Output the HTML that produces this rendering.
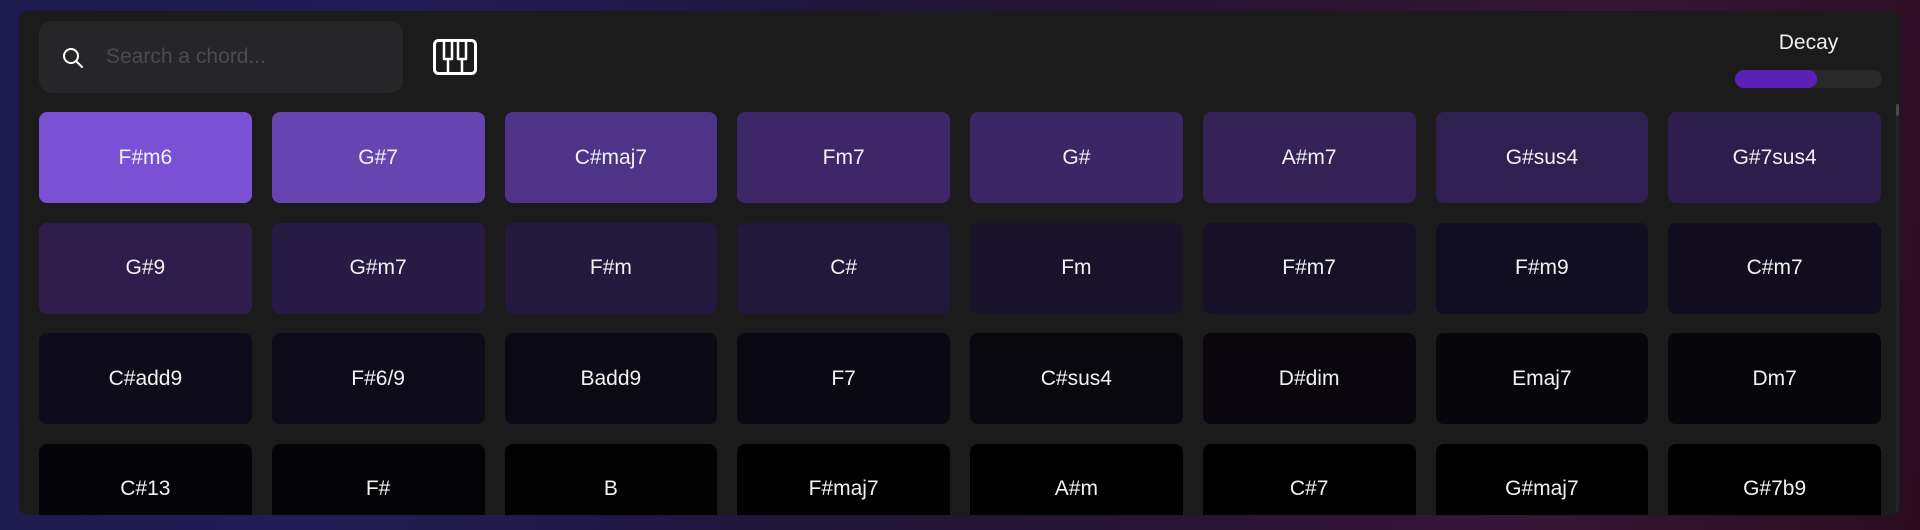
<!DOCTYPE html>
<html><head><meta charset="utf-8"><style>
*{box-sizing:border-box;margin:0;padding:0}
html,body{width:1920px;height:530px;overflow:hidden}
body{background:linear-gradient(100deg,#1c1a4e 0%,#221d55 20%,#1f1538 45%,#2a1433 65%,#371536 80%,#2b0c1e 100%);font-family:"Liberation Sans","DejaVu Sans",sans-serif;position:relative}
.panel{position:absolute;left:19px;top:11px;width:1881px;height:504px;background:#1b1b1c;border-radius:9px;overflow:hidden}
.search{position:absolute;left:20px;top:10px;width:364px;height:72px;background:#262628;border-radius:13px}
.search svg{position:absolute;left:23px;top:26px}
.search span{position:absolute;left:67px;top:24px;font-size:21px;color:#4b4b50}
.piano{position:absolute;left:414px;top:28px}
.decay{position:absolute;left:1716px;top:20px;width:147px;text-align:center;color:#eee;font-size:21px}
.track{position:absolute;left:1716px;top:59px;width:147px;height:18px;background:#29292b;border-radius:9px}
.fill{position:absolute;left:0;top:0;width:82px;height:18px;background:#5b21b6;border-radius:9px}
.sb{position:absolute;left:1877px;top:93px;width:3px;height:420px;background:#242426}
.sbt{position:absolute;left:1877px;top:93px;width:3px;height:12px;background:#4a4a4c;border-radius:2px}
.grid{position:absolute;left:20px;top:101px;display:grid;grid-template-columns:repeat(8,212.75px);column-gap:20px;row-gap:19.5px}
.b{height:91px;border-radius:8px;display:flex;align-items:center;justify-content:center;color:#f2f2f2;font-size:21px}
</style></head><body>
<div class="panel">
 <div class="search">
  <svg width="22" height="22" viewBox="0 0 22 22" fill="none" stroke="#fff" stroke-width="2"><circle cx="9" cy="9" r="7"/><path d="M14 14l6 6" stroke-linecap="round"/></svg>
  <span>Search a chord...</span>
 </div>
 <svg class="piano" width="44" height="36" viewBox="0 0 44 36" fill="none" stroke="#fff" stroke-width="3"><rect x="1.5" y="1.5" width="41" height="33" rx="4"/><path d="M11 2v18h8V2M25 2v18h8V2M15 20v14M29 20v14" stroke-width="2.5" stroke-linejoin="round"/></svg>
 <div class="decay">Decay</div>
 <div class="track"><div class="fill"></div></div>
 <div class="sb"></div><div class="sbt"></div>
 <div class="grid">
  <div class="b" style="background:#7a50d5">F#m6</div>
  <div class="b" style="background:#6745b0">G#7</div>
  <div class="b" style="background:#4d3488">C#maj7</div>
  <div class="b" style="background:#3d2768">Fm7</div>
  <div class="b" style="background:#3b2666">G#</div>
  <div class="b" style="background:#342155">A#m7</div>
  <div class="b" style="background:#301f51">G#sus4</div>
  <div class="b" style="background:#2c1d4c">G#7sus4</div>
  <div class="b" style="background:#2e1d4b">G#9</div>
  <div class="b" style="background:#271a44">G#m7</div>
  <div class="b" style="background:#23183d">F#m</div>
  <div class="b" style="background:#22183c">C#</div>
  <div class="b" style="background:#19122b">Fm</div>
  <div class="b" style="background:#161127">F#m7</div>
  <div class="b" style="background:#120e21">F#m9</div>
  <div class="b" style="background:#110d1f">C#m7</div>
  <div class="b" style="background:#0e0b1a">C#add9</div>
  <div class="b" style="background:#0d0b18">F#6/9</div>
  <div class="b" style="background:#0b0914">Badd9</div>
  <div class="b" style="background:#0a0913">F7</div>
  <div class="b" style="background:#09080f">C#sus4</div>
  <div class="b" style="background:#09070d">D#dim</div>
  <div class="b" style="background:#07060a">Emaj7</div>
  <div class="b" style="background:#07060a">Dm7</div>
  <div class="b" style="background:#050408">C#13</div>
  <div class="b" style="background:#040306">F#</div>
  <div class="b" style="background:#020203">B</div>
  <div class="b" style="background:#010101">F#maj7</div>
  <div class="b" style="background:#000">A#m</div>
  <div class="b" style="background:#000">C#7</div>
  <div class="b" style="background:#000">G#maj7</div>
  <div class="b" style="background:#000">G#7b9</div>
 </div>
</div>
</body></html>
